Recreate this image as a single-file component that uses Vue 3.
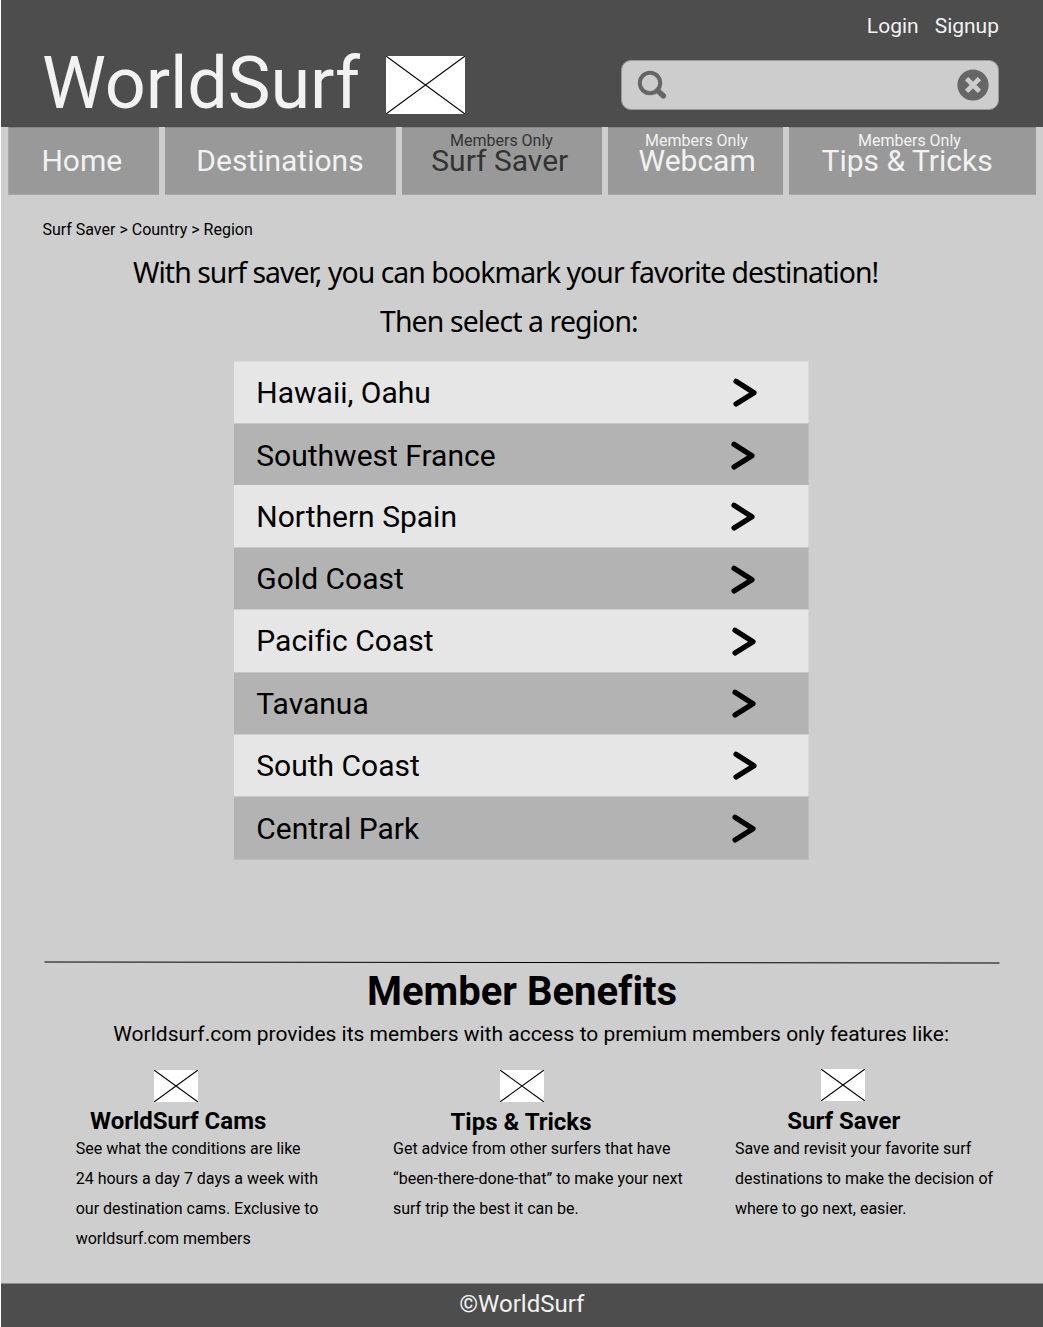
<script setup>
const tabs = [
  { label: 'Home', width: 151, pad: 32.4 },
  { label: 'Destinations', width: 231, pad: 31.3 },
  { label: 'Surf Saver', width: 200, pad: 29.3, note: 48, active: true },
  { label: 'Webcam', width: 175, pad: 30.5, note: 37 },
  { label: 'Tips & Tricks', width: 247, pad: 32.5, note: 69 }
]

const regions = [
  { name: 'Hawaii, Oahu', height: 62, base: 0, shift: 2, drop: 0 },
  { name: 'Southwest France', height: 62, base: 1, shift: 0, drop: 1 },
  { name: 'Northern Spain', height: 62, base: 0, shift: 0, drop: 0 },
  { name: 'Gold Coast', height: 62, base: 0, shift: 0, drop: 0.6 },
  { name: 'Pacific Coast', height: 63, base: 0, shift: 1, drop: 0.6 },
  { name: 'Tavanua', height: 62, base: 0, shift: 1, drop: 0 },
  { name: 'South Coast', height: 62, base: 0, shift: 2, drop: 0 },
  { name: 'Central Park', height: 64, base: 1, shift: 1, drop: 1 }
]

const benefits = [
  {
    title: 'WorldSurf Cams', key: 'cams',
    lines: ['See what the conditions are like', '24 hours a day 7 days a week with', 'our destination cams. Exclusive to', 'worldsurf.com members']
  },
  {
    title: 'Tips & Tricks', key: 'tips',
    lines: ['Get advice from other surfers that have', '“been-there-done-that” to make your next', 'surf trip the best it can be.']
  },
  {
    title: 'Surf Saver', key: 'saver',
    lines: ['Save and revisit your favorite surf', 'destinations to make the decision of', 'where to go next, easier.']
  }
]
</script>

<template>
  <div class="page">
    <header class="header">
      <div class="brand">
        <h1 class="logo">WorldSurf</h1>
        <svg class="logo-image" viewBox="0 0 79 58" width="79" height="58">
          <rect width="79" height="58" fill="#fff" />
          <path d="M0 0L79 58M79 0L0 58" stroke="#000" stroke-width="1.1" />
        </svg>
      </div>
      <div class="tools">
        <div class="account"><a class="login">Login</a><a class="signup">Signup</a></div>
        <div class="search">
          <svg class="glass" width="32" height="32" viewBox="0 0 32 32" fill="none" stroke="#666">
            <circle cx="13" cy="13" r="10.2" stroke-width="4" />
            <path d="M20.5 20.5L26.3 25.8" stroke-width="5.5" stroke-linecap="round" />
          </svg>
          <svg class="clear" width="32" height="32" viewBox="0 0 32 32">
            <circle cx="16" cy="16" r="15.6" fill="#666" />
            <path d="M9.6 9.6L22.4 22.4M22.4 9.6L9.6 22.4" stroke="#cdcdcd" stroke-width="4.8" />
          </svg>
        </div>
      </div>
    </header>

    <nav class="nav">
      <a v-for="t in tabs" :key="t.label" class="tab" :class="{ active: t.active }" :style="{ width: t.width + 'px' }">
        <span class="note" :style="{ paddingLeft: (t.note || 0) + 'px' }">{{ t.note ? 'Members Only' : '' }}</span>
        <span class="tab-label" :style="{ paddingLeft: t.pad + 'px' }">{{ t.label }}</span>
      </a>
    </nav>

    <main class="main">
      <div class="crumbs">Surf Saver &gt; Country &gt; Region</div>
      <p class="intro first">With surf saver, you can bookmark your favorite destination!</p>
      <p class="intro second">Then select a region:</p>

      <ul class="regions">
        <li v-for="r in regions" :key="r.name" class="region" :style="{ height: r.height + 'px' }">
          <span class="region-name" :style="{ marginTop: r.base + 'px' }">{{ r.name }}</span>
          <svg class="chevron" width="28" height="32" viewBox="0 0 28 32" :style="{ marginRight: 51 - r.shift + 'px', marginTop: 15 + r.drop + 'px' }">
            <path d="M5 4.3L23 15.8L5 27" fill="none" stroke="#000" stroke-width="5.2" stroke-linecap="round" stroke-linejoin="round" />
          </svg>
        </li>
      </ul>

      <section class="members">
        <svg class="rule" width="956" height="3" viewBox="0 0 956 3">
          <path d="M0.5 1L955.5 2" stroke="#000" stroke-width="1" />
        </svg>
        <h2 class="members-title">Member Benefits</h2>
        <p class="members-lead">Worldsurf.com provides its members with access to premium members only features like:</p>
        <div class="benefits">
          <article v-for="b in benefits" :key="b.key" class="benefit" :class="b.key">
            <svg class="thumb" width="44" height="32" viewBox="0 0 44 32">
              <rect width="44" height="32" fill="#fff" />
              <path d="M0 0L44 32M44 0L0 32" stroke="#000" stroke-width="1.1" />
            </svg>
            <h3 class="benefit-title">{{ b.title }}</h3>
            <p class="benefit-text"><span v-for="l in b.lines" :key="l">{{ l }}</span></p>
          </article>
        </div>
      </section>
    </main>

    <footer class="footer">©WorldSurf</footer>
  </div>
</template>

<style>
body { margin: 0; background: #fff; }
</style>

<style scoped>
.page {
  margin-left: 1px;
  width: 1042px;
  height: 1327px;
  overflow: hidden;
  display: flex;
  flex-direction: column;
  background: #cecece;
  color: #000;
  font-family: Roboto, "Liberation Sans", sans-serif;
  font-variant-ligatures: none;
  white-space: nowrap;
}
h1, h2, h3, p, ul { margin: 0; padding: 0; font-weight: 400; }
svg { display: block; flex: none; }

.header {
  height: 127px;
  box-sizing: border-box;
  flex: none;
  display: flex;
  justify-content: space-between;
  background: #4d4d4d;
  color: #f2f2f2;
}
.brand { display: flex; padding: 40px 0 0 41px; }
.logo { width: 344px; padding-top: 1px; font-size: 72px; line-height: 86px; letter-spacing: -0.1px; }
.logo-image { margin-top: 16px; }
.tools { width: 378px; margin-right: 44px; }
.account { display: flex; justify-content: flex-end; gap: 16px; height: 60px; padding-top: 14px; box-sizing: border-box; font-size: 21px; line-height: 24px; }
.search {
  box-sizing: border-box;
  width: 378px;
  height: 50px;
  display: flex;
  justify-content: space-between;
  align-items: center;
  padding: 0 9px 0 15px;
  border: 1px solid #999;
  border-radius: 10px;
  background: #cdcdcd;
}
.glass { margin-top: 1px; }

.nav { flex: none; display: flex; gap: 6px; height: 68px; padding-left: 7px; }
.tab {
  box-sizing: border-box;
  height: 68px;
  padding-top: 1px;
  border-top: 1px solid #858585;
  border-bottom: 1px solid #a8a8a8;
  background: #999;
  color: #f2f2f2;
  display: flex;
  flex-direction: column;
}
.tab:first-child { border-left: 1px solid #a8a8a8; }
.tab.active { color: #333; }
.note { height: 12px; font-size: 16px; line-height: 24px; }
.tab-label { font-size: 30px; line-height: 40px; }

.main { flex: 1; min-height: 0; }
.crumbs { padding: 23px 0 0 41.4px; font-size: 16px; line-height: 24px; }
.intro { font-family: "Noto Sans", "Open Sans", sans-serif; font-size: 28.4px; line-height: 40px; }
.first { margin: 10px 0 0 132px; letter-spacing: -0.95px; }
.second { margin: 9px 0 0 379px; letter-spacing: -0.87px; }

.regions { list-style: none; width: 575px; margin: 20px 0 0 233px; }
.region {
  box-sizing: border-box;
  display: flex;
  justify-content: space-between;
  align-items: flex-start;
  padding-left: 22.3px;
  background: #b3b3b3;
  border-top: 1px solid #c8c8c8;
  border-right: 1px solid #bebebe;
}
.region:nth-child(odd) { background: #e6e6e6; border-top-color: #cecece; border-right-color: #d9d9d9; }
.region:nth-child(1) { border-top-color: #dadada; }
.region:nth-child(3) { border-top-color: #e6e6e6; }
.region:last-child { border-bottom: 1px solid #bfbfbf; }
.region-name { font-size: 30px; line-height: 62px; }

.members { padding-top: 101px; }
.rule { margin-left: 43px; }
.members-title { margin: 5px 0 0 366px; font-size: 40px; line-height: 46px; font-weight: 700; }
.members-lead { margin: 6px 0 0 112.3px; font-size: 21px; line-height: 26px; }
.benefits { display: flex; padding: 23px 0 0 75px; }
.benefit-title { font-size: 24px; line-height: 30px; font-weight: 700; }
.benefit-text { font-size: 16px; line-height: 30px; }
.benefit-text span { display: block; }
.cams { width: 317px; }
.cams .thumb { margin-left: 78px; }
.cams .benefit-title { margin: 4px 0 -2px 14px; }
.cams .benefit-text { margin-left: -0.3px; }
.tips { width: 342px; }
.tips .thumb { margin-left: 107px; }
.tips .benefit-title { margin: 5px 0 -3px 57.5px; }
.saver .thumb { margin: -1px 0 0 86px; }
.saver .benefit-title { margin: 5px 0 -2px 52.3px; }

.footer {
  flex: none;
  height: 44px;
  box-sizing: border-box;
  border-top: 1px solid #8d8d8d;
  padding-left: 458.2px;
  background: #4d4d4d;
  color: #f2f2f2;
  font-size: 24px;
  line-height: 40px;
}
</style>
